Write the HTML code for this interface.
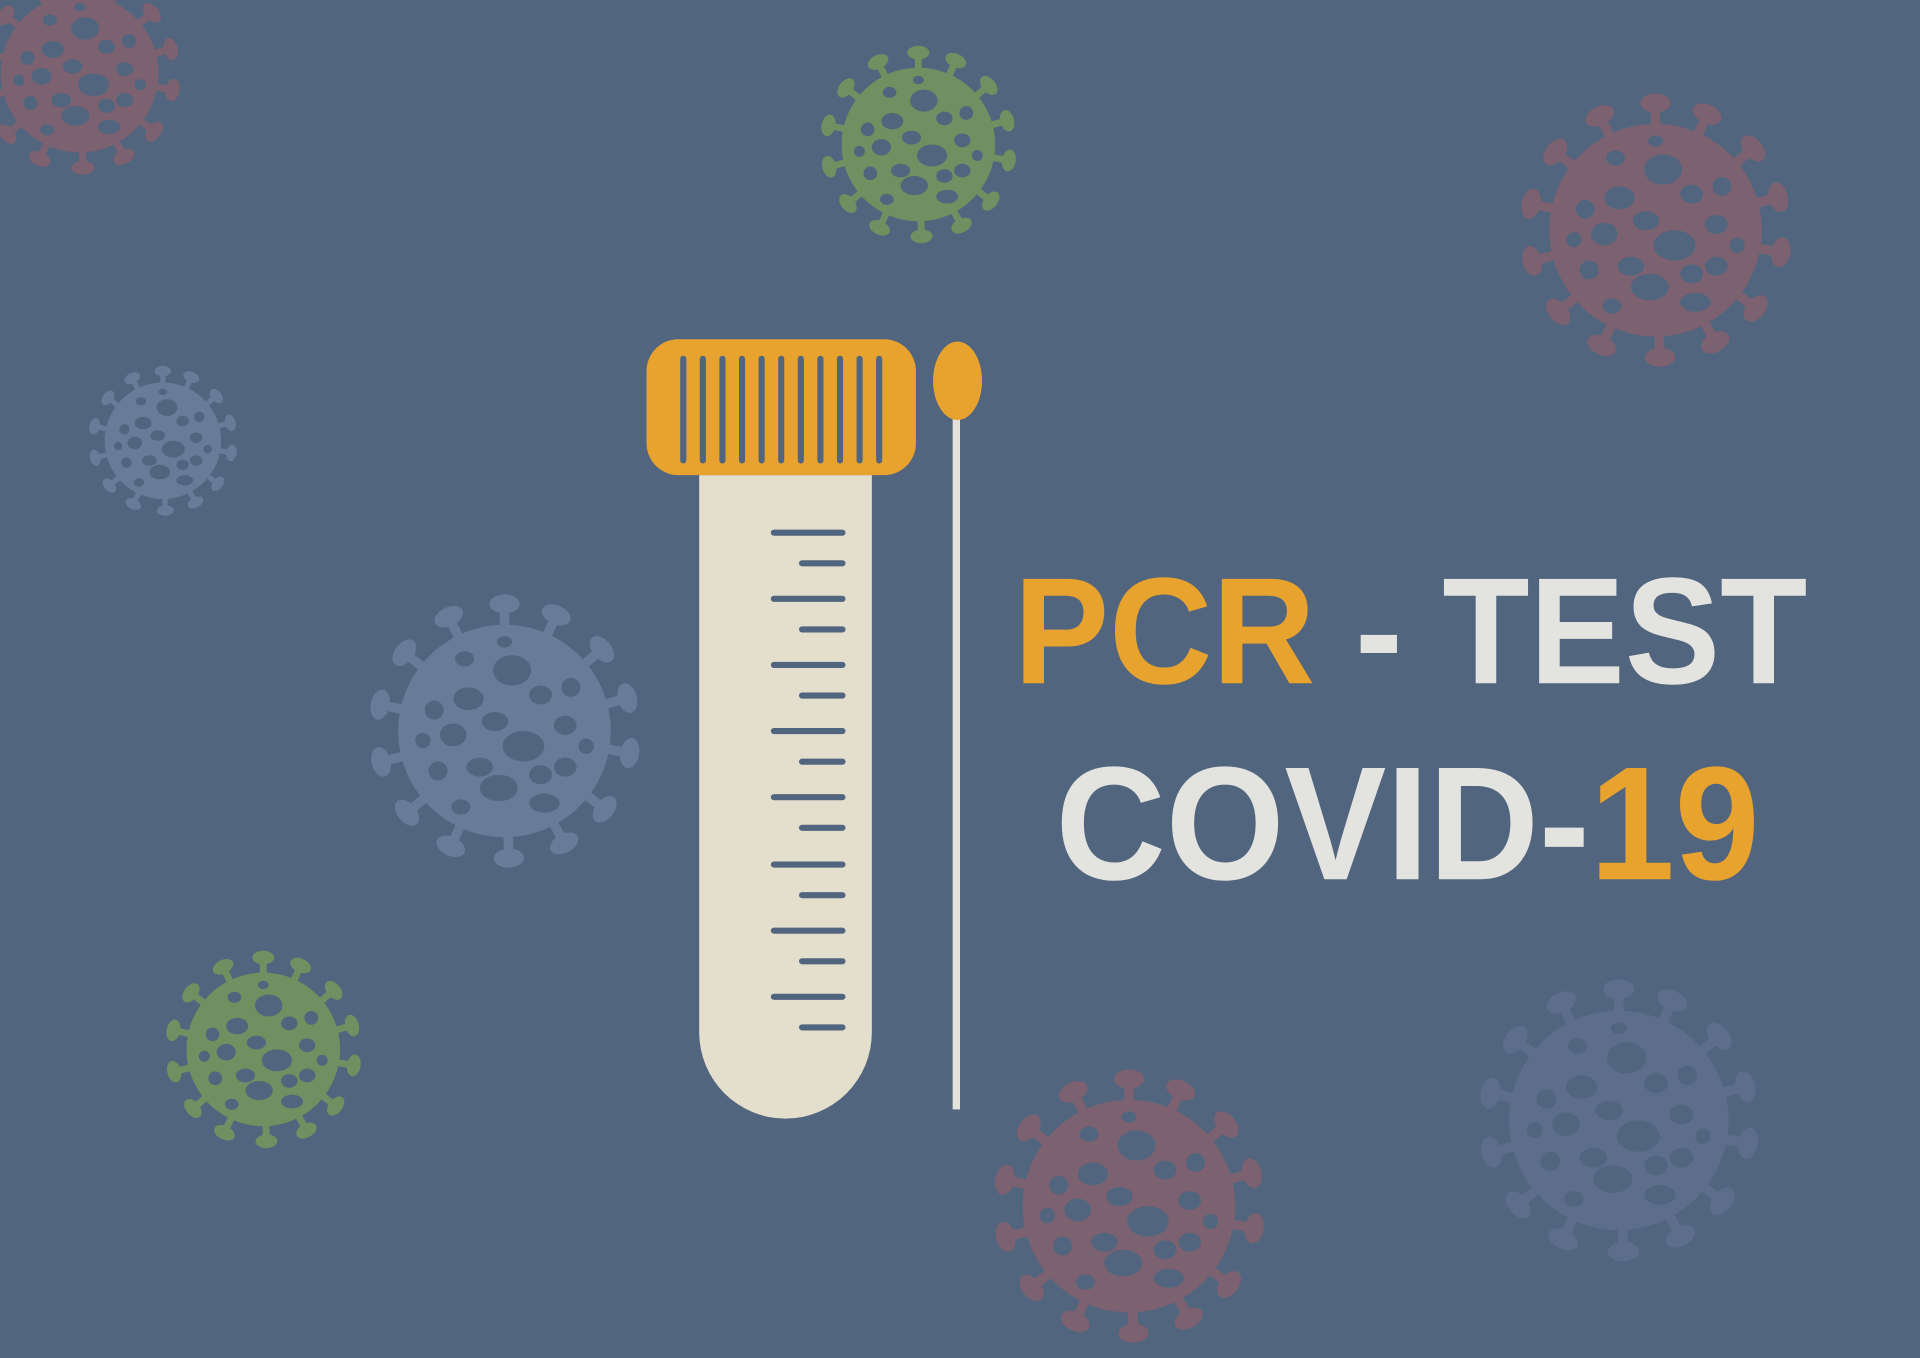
<!DOCTYPE html>
<html><head><meta charset="utf-8"><style>html,body{margin:0;padding:0;background:#52657e;}svg{display:block}</style></head>
<body>
<svg width="1920" height="1358" viewBox="0 0 1568 1109" preserveAspectRatio="none" xmlns="http://www.w3.org/2000/svg">
<defs>
<g id="sp"><rect x="-2.5" y="-66" width="5" height="16"/><ellipse cx="0" cy="-67" rx="8" ry="5"/></g>
<g id="v">
<circle r="56"/>
<use href="#sp"/><use href="#sp" transform="rotate(24)"/><use href="#sp" transform="rotate(50)"/><use href="#sp" transform="rotate(75)"/><use href="#sp" transform="rotate(100)"/><use href="#sp" transform="rotate(128)"/><use href="#sp" transform="rotate(152)"/><use href="#sp" transform="rotate(178)"/><use href="#sp" transform="rotate(205)"/><use href="#sp" transform="rotate(230)"/><use href="#sp" transform="rotate(256)"/><use href="#sp" transform="rotate(282)"/><use href="#sp" transform="rotate(308)"/><use href="#sp" transform="rotate(334)"/>
<g fill="#52657e">
<ellipse cx="4" cy="-32" rx="10" ry="8"/><ellipse cx="-19" cy="-17" rx="8" ry="6"/><ellipse cx="-5" cy="-5" rx="7" ry="5"/><ellipse cx="19" cy="-19" rx="6" ry="5"/>
<ellipse cx="10" cy="8" rx="11" ry="8"/><ellipse cx="-27" cy="2" rx="7" ry="6"/><ellipse cx="-13" cy="19" rx="7" ry="5"/><ellipse cx="-3" cy="30" rx="10" ry="7"/>
<ellipse cx="19" cy="23" rx="6" ry="5"/><ellipse cx="32" cy="-3" rx="6" ry="5"/><ellipse cx="35" cy="-23" rx="5" ry="5"/><ellipse cx="-37" cy="-11" rx="5" ry="5"/>
<ellipse cx="-35" cy="21" rx="5" ry="5"/><ellipse cx="32" cy="19" rx="6" ry="5"/><ellipse cx="21" cy="38" rx="8" ry="5"/><ellipse cx="-21" cy="-38" rx="5" ry="4"/>
<ellipse cx="-23" cy="40" rx="5" ry="4"/><ellipse cx="0" cy="-47" rx="4" ry="3"/><ellipse cx="-43" cy="5" rx="4" ry="4"/><ellipse cx="43" cy="8" rx="4" ry="4"/>
</g>
</g>
</defs>
<rect width="1568" height="1109" fill="#52657e"/>
<use href="#v" fill="#7c6170" transform="translate(65,60) scale(1.15)"/>
<use href="#v" fill="#6f9060" transform="translate(750,118) scale(1.12)"/>
<use href="#v" fill="#7c6170" transform="translate(1352,188) scale(1.55)"/>
<use href="#v" fill="#687b98" transform="translate(133,360) scale(0.85)"/>
<use href="#v" fill="#687b98" transform="translate(412,597) scale(1.55)"/>
<use href="#v" fill="#6f9060" transform="translate(215,857) scale(1.12)"/>
<use href="#v" fill="#7c6170" transform="translate(922,985) scale(1.55)"/>
<use href="#v" fill="#5c6e8b" transform="translate(1322,915) scale(1.6)"/>

<!-- tube -->
<path d="M571,388 H712 V843 A70.5,70.5 0 0 1 571,843 Z" fill="#e4dfcd"/>
<rect x="528" y="277" width="220" height="111" rx="26" fill="#e8a22e"/>
<g stroke="#52657e" stroke-width="5" stroke-linecap="round">
<line x1="558" y1="293" x2="558" y2="376"/><line x1="574" y1="293" x2="574" y2="376"/><line x1="590" y1="293" x2="590" y2="376"/><line x1="606" y1="293" x2="606" y2="376"/><line x1="622" y1="293" x2="622" y2="376"/><line x1="638" y1="293" x2="638" y2="376"/><line x1="654" y1="293" x2="654" y2="376"/><line x1="670" y1="293" x2="670" y2="376"/><line x1="686" y1="293" x2="686" y2="376"/><line x1="702" y1="293" x2="702" y2="376"/><line x1="718" y1="293" x2="718" y2="376"/>
</g>
<g stroke="#52657e" stroke-width="5" stroke-linecap="round">
<line x1="632" y1="435" x2="688" y2="435"/><line x1="655" y1="460" x2="688" y2="460"/>
<line x1="632" y1="489" x2="688" y2="489"/><line x1="655" y1="514" x2="688" y2="514"/>
<line x1="632" y1="543" x2="688" y2="543"/><line x1="655" y1="568" x2="688" y2="568"/>
<line x1="632" y1="597" x2="688" y2="597"/><line x1="655" y1="622" x2="688" y2="622"/>
<line x1="632" y1="651" x2="688" y2="651"/><line x1="655" y1="676" x2="688" y2="676"/>
<line x1="632" y1="706" x2="688" y2="706"/><line x1="655" y1="731" x2="688" y2="731"/>
<line x1="632" y1="760" x2="688" y2="760"/><line x1="655" y1="785" x2="688" y2="785"/>
<line x1="632" y1="814" x2="688" y2="814"/><line x1="655" y1="839" x2="688" y2="839"/>
</g>
<!-- swab -->
<rect x="778" y="338" width="6" height="568" fill="#e4e2dc"/>
<ellipse cx="782" cy="311" rx="20" ry="32" fill="#e8a22e"/>

<g font-family="Liberation Sans, sans-serif" font-weight="bold">
<text x="828" y="558" font-size="124" textLength="648" lengthAdjust="spacingAndGlyphs" fill="#e3e3e0"><tspan fill="#e8a22e">PCR</tspan> - TEST</text>
<text x="862" y="718" font-size="132" textLength="575" lengthAdjust="spacingAndGlyphs" fill="#e3e3e0">COVID-<tspan fill="#e8a22e">19</tspan></text>
</g>
</svg>
</body></html>
